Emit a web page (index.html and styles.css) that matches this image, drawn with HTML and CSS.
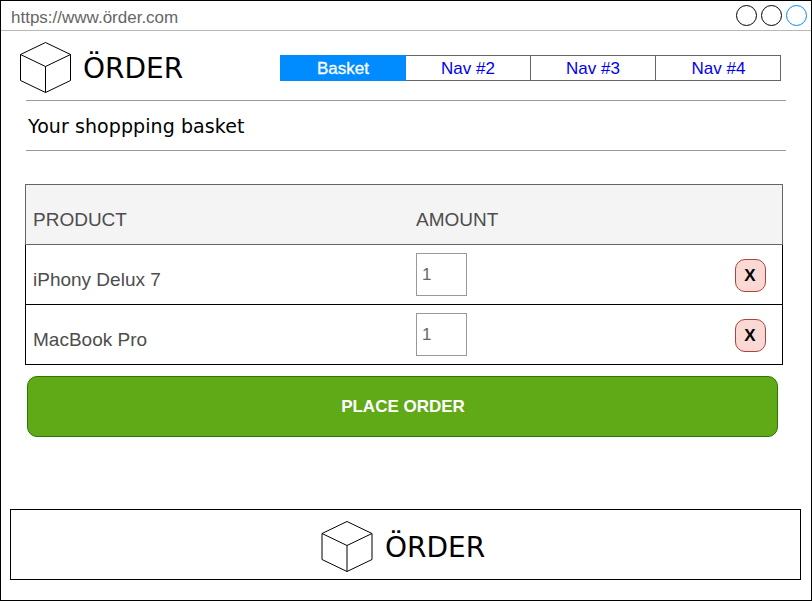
FILE: index.html
```html
<!DOCTYPE html>
<html lang="en">
<head>
<meta charset="utf-8">
<title>Örder</title>
<link rel="stylesheet" href="styles.css">
</head>
<body>
<div class="window">
  <div class="titlebar">
    <span class="url">https://www.örder.com</span>
    <div class="controls"><i class="dot"></i><i class="dot"></i><i class="dot dot-blue"></i></div>
  </div>
  <header class="header">
    <div class="brand">
      <svg class="cube" viewBox="0 0 52 52"><path d="M.5 12.5 25.5.5 50.5 12.5V38.5L25.5 50.5.5 38.5ZM.5 12.5 25.5 24.5 50.5 12.5M25.5 24.5V50.5"/></svg>
      <span class="name">ÖRDER</span>
    </div>
    <nav class="nav">
      <a class="tab active">Basket</a><a class="tab">Nav #2</a><a class="tab">Nav #3</a><a class="tab">Nav #4</a>
    </nav>
  </header>
  <h1 class="heading">Your shoppping basket</h1>
  <section class="basket">
    <div class="row head"><span>PRODUCT</span><span>AMOUNT</span></div>
    <div class="row"><span>iPhony Delux 7</span><div class="amount">1</div><button class="remove">X</button></div>
    <div class="row"><span>MacBook Pro</span><div class="amount">1</div><button class="remove">X</button></div>
  </section>
  <button class="order">PLACE ORDER</button>
  <footer class="footer">
    <div class="brand">
      <svg class="cube" viewBox="0 0 52 52"><path d="M1 12.5 26 .5 51 12.5V38.5L26 50.5 1 38.5ZM1 12.5 26 24.5 51 12.5M26 24.5V50.5"/></svg>
      <span class="name">ÖRDER</span>
    </div>
  </footer>
</div>
</body>
</html>
```
FILE: styles.css
```css
* { box-sizing: border-box; }
body { margin: 0; background: #fff; font: 17px/20px "Liberation Sans", Arial, sans-serif; }
.window { width: 812px; height: 601px; border: 1px solid #000; overflow: hidden; }
.titlebar { display: flex; justify-content: space-between; height: 30px; padding: 4px 4px 0 10px; border-bottom: 1px solid #b8b8b8; color: #666; }
.url { padding-top: 3px; }
.controls { display: flex; gap: 4px; }
.dot { width: 21px; height: 21px; border: 1px solid #000; border-radius: 50%; }
.dot-blue { border-color: #008cff; }
.header { display: flex; justify-content: space-between; align-items: flex-start; height: 69px; padding: 11px 30px 0 19px; }
.brand { display: flex; align-items: center; gap: 11px; height: 52px; font: 28px/34px "DejaVu Sans", Verdana, sans-serif; color: #000; }
.name { padding-top: 2px; }
.cube { width: 52px; height: 52px; fill: none; stroke: #000; stroke-width: 1; }
.nav { display: flex; width: 501px; height: 26px; margin-top: 13px; border: 1px solid #666; border-left: 0; }
.tab { flex: 0 0 125px; border-right: 1px solid #666; color: #00e; line-height: 25px; text-align: center; }
.tab:last-child { border-right: 0; }
.active { flex-basis: 126px; margin: -1px 0; border: 0; background: #008cff; color: #fff; line-height: 27px; -webkit-text-stroke: .3px #fff; }
.heading { height: 51px; margin: 0 25px; padding-left: 2px; border: solid #999; border-width: 1px 0; font: 19px/50px "DejaVu Sans", Verdana, sans-serif; letter-spacing: .08px; color: #000; }
.basket { width: 758px; margin: 33px 0 0 24px; color: #4d4d4d; font-size: 19px; }
.row { display: grid; grid-template-columns: 383px 1fr 31px; height: 60px; padding: 0 16px 0 7px; border: 1px solid #000; border-top: 0; line-height: 69px; }
.head { height: 61px; border: 1px solid #666; background: #f4f4f4; }
.amount { width: 51px; height: 43px; margin-top: 8px; padding-left: 5px; border: 1px solid #999; color: #666; font-size: 17px; line-height: 42px; }
.remove { width: 31px; height: 33px; margin-top: 14px; padding: 0 1px 0 0; border: 1px solid #b0413a; border-radius: 10px; background: #fad9d5; color: #000; font: bold 17px/30px "Liberation Sans", Arial, sans-serif; }
.order { display: block; width: 751px; height: 61px; margin: 11px 0 0 26px; padding: 0 0 0 1px; border: 1px solid #2d7600; border-radius: 10px; background: #60a917; color: #fff; font: bold 17px/20px "Liberation Sans", Arial, sans-serif; }
.footer { display: flex; width: 791px; height: 71px; margin: 72px 0 0 9px; padding: 11px 0 0 310px; border: 1px solid #000; }
.footer .brand { gap: 12px; }
```
